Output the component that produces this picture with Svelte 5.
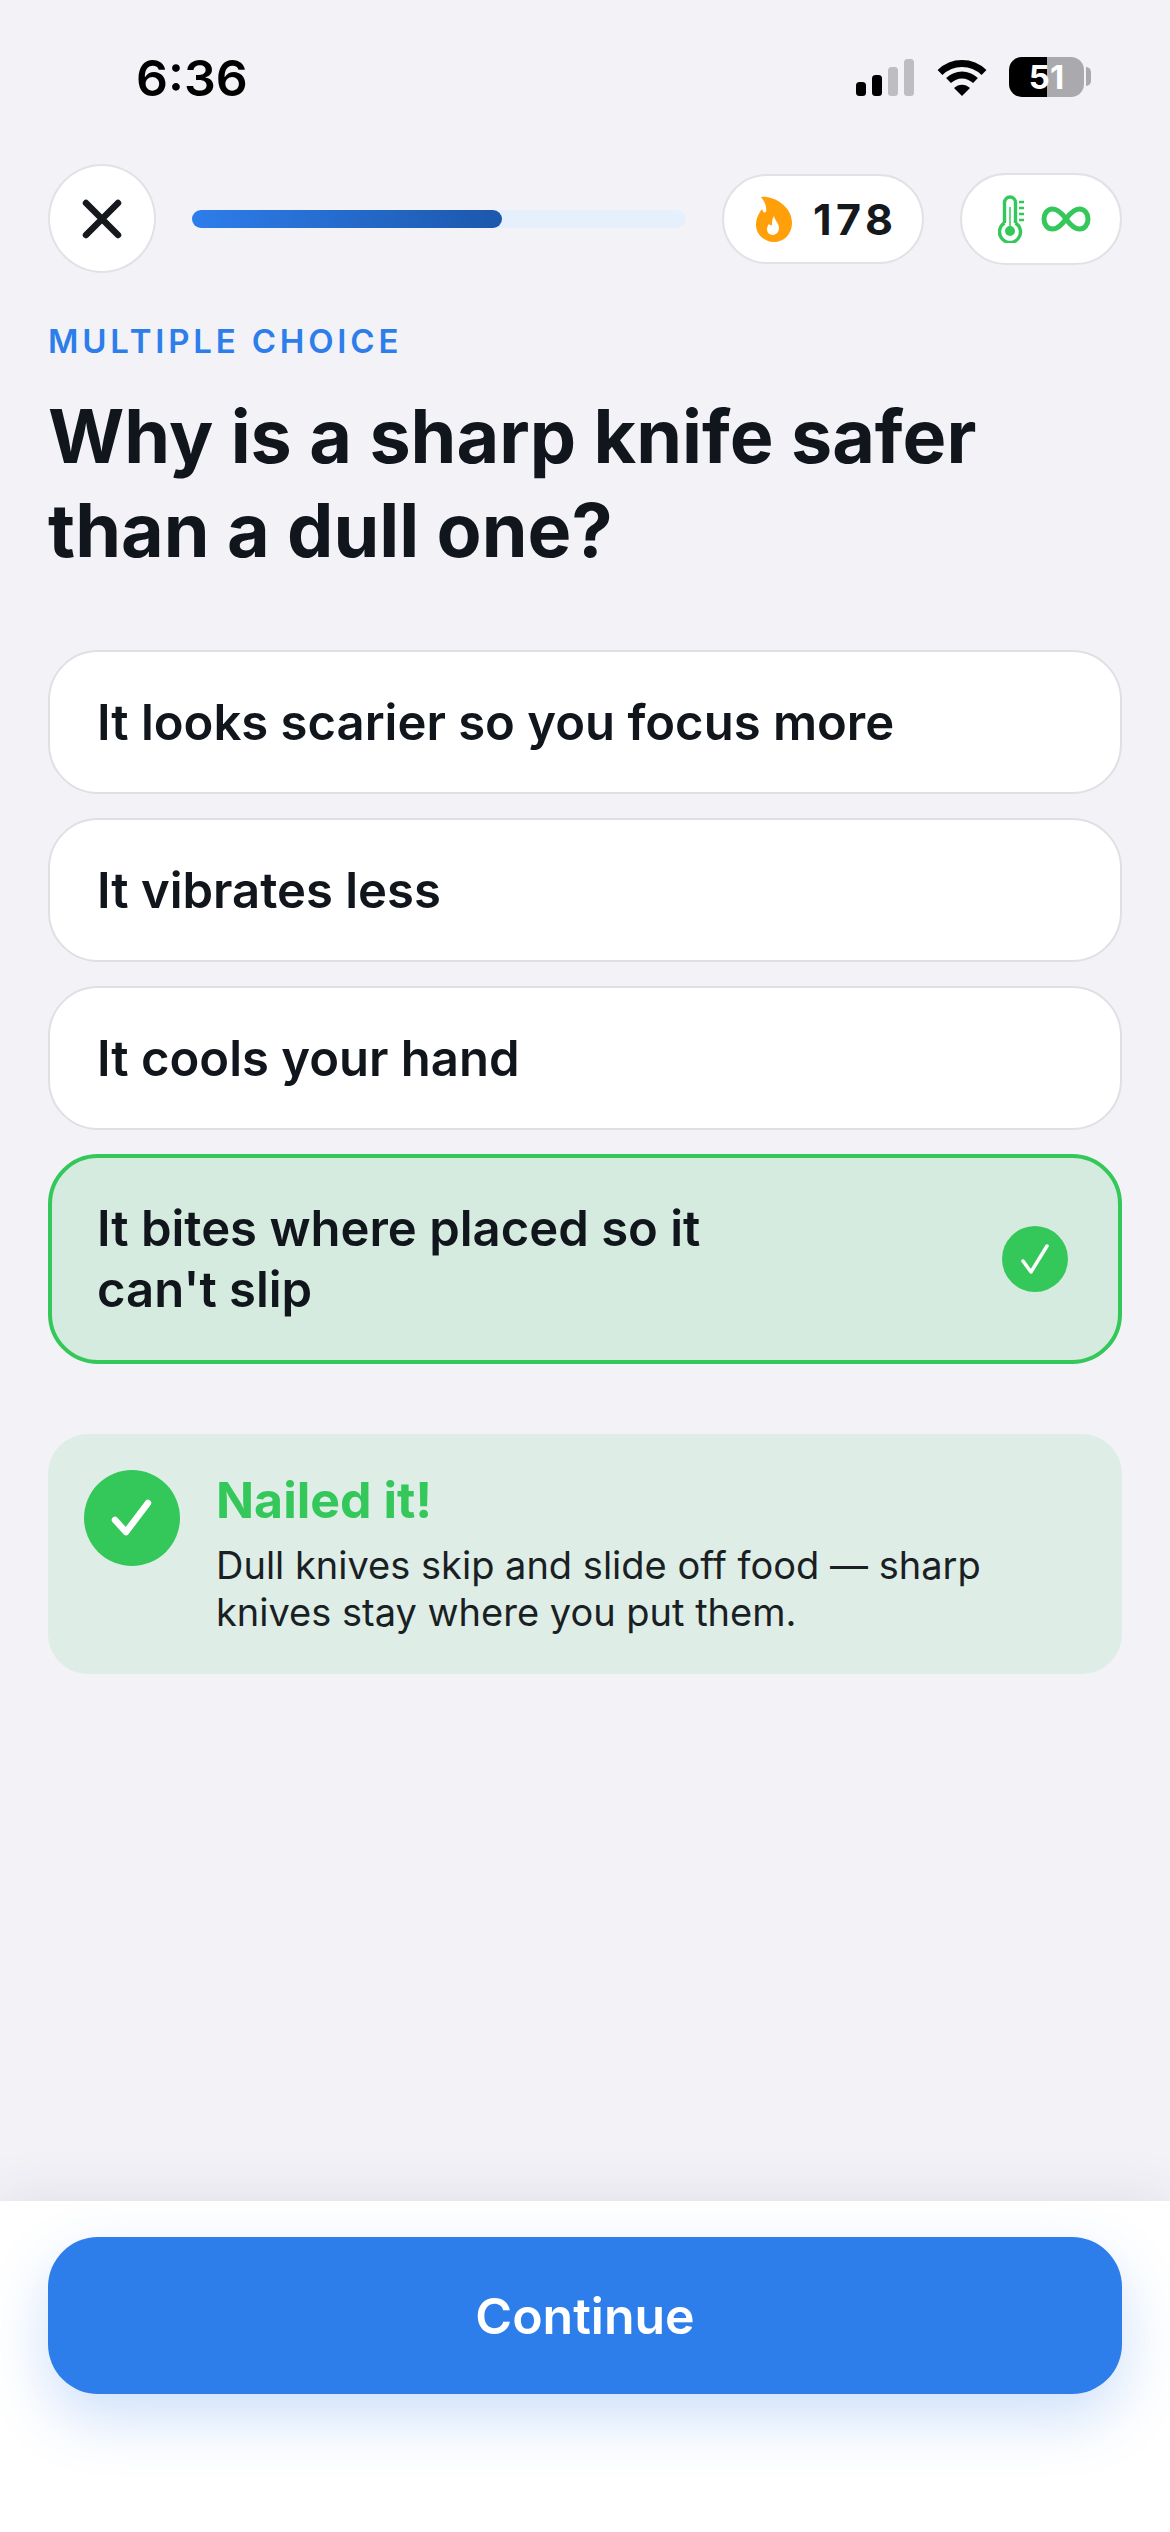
<script>
  const options = [
    { text: 'It looks scarier so you focus more', correct: false },
    { text: 'It vibrates less', correct: false },
    { text: 'It cools your hand', correct: false },
    { text: "It bites where placed so it can't slip", correct: true }
  ];
</script>

<div class="screen">
  <div class="status">
    <span class="time">6:36</span>
    <div class="status-icons">
      <div class="signal">
        <i class="b1"></i>
        <i class="b2"></i>
        <i class="b3"></i>
        <i class="b4"></i>
      </div>
      <svg class="wifi" width="50" height="37" viewBox="0 0 50 37">
        <path d="M3 13.5C15.5 1.5 34.500 1.500 47 13.500" fill="none" stroke="#000" stroke-width="7" />
        <path d="M11.500 21.500C19.500 14 30.500 14 38.500 21.500" fill="none" stroke="#000" stroke-width="7" />
        <path d="M17 29C21.500 24.500 28.500 24.500 33 29L25 37Z" fill="#000" />
      </svg>
      <div class="battery">51</div>
      <div class="battery-cap"></div>
    </div>
  </div>

  <div class="topbar">
    <button class="close" aria-label="Close">
      <svg width="40" height="40" viewBox="0 0 40 40">
        <path d="M4 4L36 36M36 4L4 36" stroke="#15181c" stroke-width="6.500" stroke-linecap="round" />
      </svg>
    </button>
    <div class="progress"><div class="progress-fill"></div></div>
    <div class="pill streak">
      <svg width="36" height="46" viewBox="0 0 36 46">
        <path d="M5 1C14-1 36 8 36 27C36 38 28 46 18 46C8 46 0 38 0 29C0 22 3 17 6 13C7 16 8 17 10 16C11 11 9 6 5 1Z" fill="#ff9f0a" />
        <path d="M18 20C19 25 23 27 23 32C23 36 20 39 17 39C13 39 11 36 11 33C11 31 12 29 13 28C14 29 15 30 16 29C16 26 16 23 18 20Z" fill="#fff" />
      </svg>
      <span>178</span>
    </div>
    <div class="pill temp">
      <svg width="26" height="48" viewBox="0 0 26 48">
        <path d="M6.500 28V7.500a5.500 5.500 0 0 1 11 0V28" fill="none" stroke="#34c759" stroke-width="3.400" />
        <path d="M6.500 28a10.500 10.500 0 1 0 11 0" fill="none" stroke="#34c759" stroke-width="3.400" />
        <path d="M12 12V32" stroke="#34c759" stroke-width="1.500" />
        <circle cx="12" cy="36" r="5" fill="#34c759" />
        <path d="M21 7h5M21 13h5M21 19h5M21 25h5" stroke="#34c759" stroke-width="2.400" />
      </svg>
      <svg width="50" height="26" viewBox="0 0 50 26">
        <path d="M25 13C20 6 16 3 11.500 3C6.500 3 3 7.500 3 13C3 18.500 6.500 23 11.500 23C16 23 20 20 25 13C30 6 34 3 38.500 3C43.500 3 47 7.500 47 13C47 18.500 43.500 23 38.500 23C34 23 30 20 25 13Z" fill="none" stroke="#34c759" stroke-width="5" />
      </svg>
    </div>
  </div>

  <main class="content">
    <div class="label">MULTIPLE CHOICE</div>
    <h1>Why is a sharp knife safer than a dull one?</h1>

    <div class="options">
      {#each options as opt}
        <div class="option" class:correct={opt.correct}>
          <span class="option-text">{opt.text}</span>
          {#if opt.correct}
            <span class="option-check">
              <svg width="30" height="32" viewBox="0 0 30 32">
                <path d="M3 18L11 29L27 3" fill="none" stroke="#fff" stroke-width="3.500" stroke-linecap="round" stroke-linejoin="round" />
              </svg>
            </span>
          {/if}
        </div>
      {/each}
    </div>

    <div class="feedback">
      <span class="feedback-icon">
        <svg width="44" height="40" viewBox="0 0 44 40">
          <path d="M5 22L16 34L38 5" fill="none" stroke="#fff" stroke-width="6.500" stroke-linecap="round" stroke-linejoin="round" />
        </svg>
      </span>
      <div class="feedback-body">
        <div class="feedback-title">Nailed it!</div>
        <p>Dull knives skip and slide off food — sharp knives stay where you put them.</p>
      </div>
    </div>
  </main>

  <footer class="footer">
    <button class="continue">Continue</button>
  </footer>
</div>

<style>
  :global(body) {
    margin: 0;
    background: #f2f2f7;
  }

  .screen {
    width: 1170px;
    height: 2532px;
    display: flex;
    flex-direction: column;
    background: #f2f2f7;
    font-family: Inter, 'Liberation Sans', sans-serif;
    color: #11161c;
    overflow: hidden;
  }

  .status {
    height: 164px;
    box-sizing: border-box;
    padding: 50px 79px 0 136px;
    display: flex;
    justify-content: space-between;
    align-items: flex-start;
  }

  .time {
    font-size: 50px;
    font-weight: 600;
    line-height: 56px;
    color: #000;
  }

  .status-icons {
    display: flex;
    align-items: flex-start;
    padding-top: 9px;
  }

  .signal {
    display: flex;
    align-items: flex-end;
    gap: 6px;
    height: 37px;
    margin-right: 23px;
  }

  .signal i {
    display: block;
    width: 10px;
    border-radius: 3.500px;
    background: #000;
  }

  .signal .b1 { height: 14px; }
  .signal .b2 { height: 21px; }
  .signal .b3 { height: 29px; background: #bdbdc2; }
  .signal .b4 { height: 37px; background: #bdbdc2; }

  .wifi {
    margin-right: 22px;
  }

  .battery {
    width: 75px;
    height: 40px;
    margin-top: -2px;
    border-radius: 13px;
    background: linear-gradient(90deg, #000 38px, #aaaaae 38px);
    color: #fff;
    font-size: 33px;
    font-weight: 700;
    line-height: 40px;
    text-align: center;
  }

  .battery-cap {
    width: 5px;
    height: 19px;
    margin: 8px 0 0 2px;
    border-radius: 0 5px 5px 0;
    background: #aaaaae;
  }

  .topbar {
    display: flex;
    align-items: center;
    gap: 36px;
    padding: 0 48px;
    height: 109px;
  }

  .close {
    flex: none;
    width: 108px;
    height: 109px;
    padding: 0;
    border: 2px solid #e2e2e6;
    border-radius: 50%;
    background: #fff;
    display: flex;
    align-items: center;
    justify-content: center;
  }

  .progress {
    flex: 1;
    height: 18px;
    border-radius: 9px;
    background: #e6f0fd;
  }

  .progress-fill {
    width: 62.800%;
    height: 100%;
    border-radius: 9px;
    background: linear-gradient(90deg, #2d7deb, #1c58ac);
  }

  .pill {
    flex: none;
    box-sizing: border-box;
    display: flex;
    align-items: center;
    background: #fff;
    border: 2px solid #e2e2e6;
    border-radius: 46px;
  }

  .streak {
    width: 202px;
    height: 90px;
    padding-left: 32px;
    gap: 21px;
  }

  .streak span {
    font-size: 43px;
    font-weight: 700;
    letter-spacing: 4.500px;
    color: #15181c;
  }

  .temp {
    width: 162px;
    height: 92px;
    padding-left: 36px;
    gap: 17px;
  }

  .content {
    flex: 1;
    padding: 0 48px;
  }

  .label {
    margin-top: 48px;
    font-size: 33px;
    font-weight: 600;
    line-height: 40px;
    letter-spacing: 3.800px;
    color: #2d7deb;
  }

  h1 {
    margin: 29px 0 0;
    font-size: 73.600px;
    font-weight: 700;
    line-height: 94px;
    max-width: 1000px;
  }

  .options {
    display: flex;
    flex-direction: column;
    gap: 24px;
    margin-top: 72px;
  }

  .option {
    box-sizing: border-box;
    min-height: 144px;
    padding: 39.500px 47px;
    display: flex;
    align-items: center;
    justify-content: space-between;
    background: #fff;
    border: 2px solid #e0e0e4;
    border-radius: 50px;
    font-size: 49px;
    font-weight: 600;
    line-height: 61px;
  }

  .option.correct {
    padding: 40px 50px 40px 45px;
    background: #d6ebe0;
    border: 4px solid #34c759;
  }

  .correct .option-text {
    max-width: 640px;
  }

  .option-check {
    flex: none;
    width: 66px;
    height: 66px;
    border-radius: 50%;
    background: #34c759;
    display: flex;
    align-items: center;
    justify-content: center;
  }

  .feedback {
    display: flex;
    gap: 36px;
    margin-top: 70px;
    padding: 36px;
    height: 240px;
    box-sizing: border-box;
    background: #deede6;
    border-radius: 40px;
  }

  .feedback-icon {
    flex: none;
    width: 96px;
    height: 96px;
    border-radius: 50%;
    background: #34c759;
    display: flex;
    align-items: center;
    justify-content: center;
  }

  .feedback-title {
    font-size: 50px;
    font-weight: 700;
    line-height: 60px;
    color: #34c759;
  }

  .feedback-body p {
    margin: 12px 0 0;
    font-size: 38px;
    line-height: 47px;
    color: #1a1f24;
  }

  .footer {
    position: relative;
    height: 331px;
    box-sizing: border-box;
    padding: 36px 48px 0;
    background: #fff;
    box-shadow: 0 -6px 50px rgba(60, 60, 90, 0.09);
  }

  .continue {
    display: block;
    width: 100%;
    height: 157px;
    padding: 0;
    border: 0;
    border-radius: 50px;
    background: #2d7deb;
    color: #fff;
    font-family: inherit;
    font-size: 50px;
    font-weight: 600;
    box-shadow: 0 24px 60px rgba(45, 125, 235, 0.24);
  }
</style>
